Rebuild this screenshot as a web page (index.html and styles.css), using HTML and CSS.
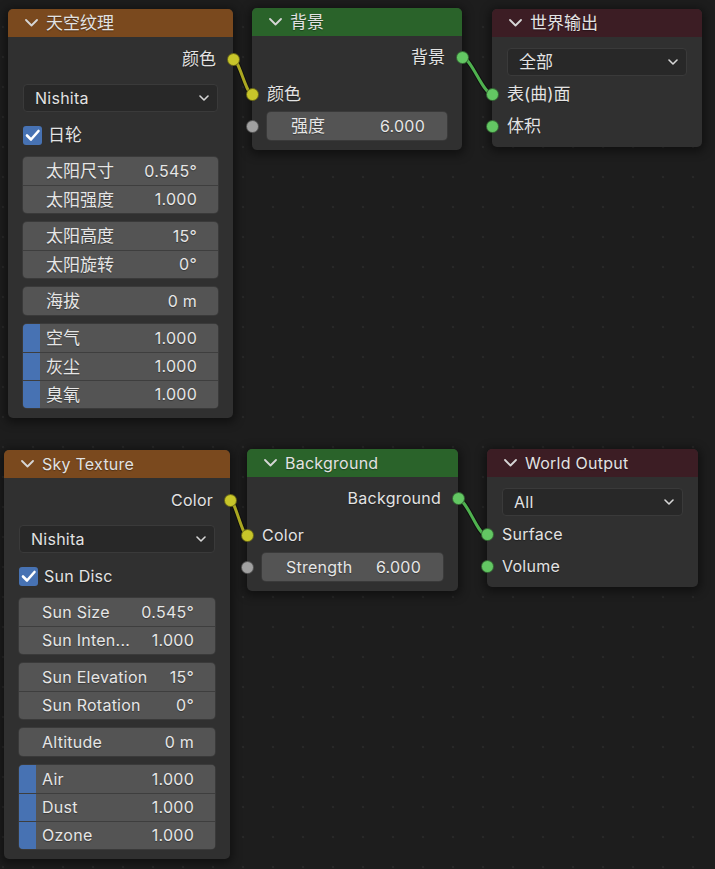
FILE: index.html
```html
<!DOCTYPE html>
<html lang="zh">
<head>
<meta charset="utf-8">
<title>Nodes</title>
<link rel="stylesheet" href="styles.css">
</head>
<body>
<div class="canvas">
  <svg class="wires" width="715" height="869" viewBox="0 0 715 869">
    <g class="w-out">
      <path d="M233 59 C239 59 246 94 252 94"/>
      <path d="M462 57 C471 57 483 94 492 94"/>
      <path d="M230 500 C235 500 242 535 247 535"/>
      <path d="M458 499 C467 499 478 536 487 536"/>
    </g>
    <g class="w-yel">
      <path d="M233 59 C239 59 246 94 252 94"/>
      <path d="M230 500 C235 500 242 535 247 535"/>
    </g>
    <g class="w-grn">
      <path d="M462 57 C471 57 483 94 492 94"/>
      <path d="M458 499 C467 499 478 536 487 536"/>
    </g>
  </svg>

  <!-- Top row (Chinese) -->
  <div class="node sky n1">
    <div class="hdr tex"><svg class="chev" viewBox="0 0 13 8"><path d="M1 1 L6.5 6.5 L12 1"/></svg><span class="cjk">天空纹理</span></div>
    <div class="body b-sky">
      <div class="row out"><span class="cjk">颜色</span><i class="sock so yel"></i></div>
      <div class="dd"><span>Nishita</span><svg class="ddchev" viewBox="0 0 10 6"><path d="M1 1 L5 5 L9 1"/></svg></div>
      <div class="chk"><span class="box"><svg viewBox="0 0 19 19"><path d="M4 9.5 L8 13.5 L15.5 5"/></svg></span><span class="cjk">日轮</span></div>
      <div class="grp g1">
        <div class="fld"><span class="cjk">太阳尺寸</span><span>0.545°</span></div>
        <div class="fld"><span class="cjk">太阳强度</span><span>1.000</span></div>
      </div>
      <div class="grp">
        <div class="fld"><span class="cjk">太阳高度</span><span>15°</span></div>
        <div class="fld"><span class="cjk">太阳旋转</span><span>0°</span></div>
      </div>
      <div class="grp">
        <div class="fld"><span class="cjk">海拔</span><span>0 m</span></div>
      </div>
      <div class="grp">
        <div class="fld fac"><span class="cjk">空气</span><span>1.000</span></div>
        <div class="fld fac"><span class="cjk">灰尘</span><span>1.000</span></div>
        <div class="fld fac"><span class="cjk">臭氧</span><span>1.000</span></div>
      </div>
    </div>
  </div>

  <div class="node bg n2">
    <div class="hdr shd"><svg class="chev" viewBox="0 0 13 8"><path d="M1 1 L6.5 6.5 L12 1"/></svg><span class="cjk">背景</span></div>
    <div class="body b-bg">
      <div class="row out"><span class="cjk">背景</span><i class="sock so grn"></i></div>
      <div class="row in r-col"><i class="sock si yel"></i><span class="cjk">颜色</span></div>
      <div class="grp g-str">
        <div class="fld str"><i class="sock si gry"></i><span class="cjk">强度</span><span>6.000</span></div>
      </div>
    </div>
  </div>

  <div class="node wo n3">
    <div class="hdr outp"><svg class="chev" viewBox="0 0 13 8"><path d="M1 1 L6.5 6.5 L12 1"/></svg><span class="cjk">世界输出</span></div>
    <div class="body b-wo">
      <div class="dd"><span class="cjk">全部</span><svg class="ddchev" viewBox="0 0 10 6"><path d="M1 1 L5 5 L9 1"/></svg></div>
      <div class="row in r-surf"><i class="sock si grn"></i><span class="cjk">表(曲)面</span></div>
      <div class="row in r-vol"><i class="sock si grn"></i><span class="cjk">体积</span></div>
    </div>
  </div>

  <!-- Bottom row (English) -->
  <div class="node sky n4">
    <div class="hdr tex"><svg class="chev" viewBox="0 0 13 8"><path d="M1 1 L6.5 6.5 L12 1"/></svg><span>Sky Texture</span></div>
    <div class="body b-sky">
      <div class="row out"><span>Color</span><i class="sock so yel"></i></div>
      <div class="dd"><span>Nishita</span><svg class="ddchev" viewBox="0 0 10 6"><path d="M1 1 L5 5 L9 1"/></svg></div>
      <div class="chk"><span class="box"><svg viewBox="0 0 19 19"><path d="M4 9.5 L8 13.5 L15.5 5"/></svg></span><span>Sun Disc</span></div>
      <div class="grp g1">
        <div class="fld"><span>Sun Size</span><span>0.545°</span></div>
        <div class="fld"><span>Sun Inten...</span><span>1.000</span></div>
      </div>
      <div class="grp">
        <div class="fld"><span>Sun Elevation</span><span>15°</span></div>
        <div class="fld"><span>Sun Rotation</span><span>0°</span></div>
      </div>
      <div class="grp">
        <div class="fld"><span>Altitude</span><span>0 m</span></div>
      </div>
      <div class="grp">
        <div class="fld fac"><span>Air</span><span>1.000</span></div>
        <div class="fld fac"><span>Dust</span><span>1.000</span></div>
        <div class="fld fac"><span>Ozone</span><span>1.000</span></div>
      </div>
    </div>
  </div>

  <div class="node bg n5">
    <div class="hdr shd"><svg class="chev" viewBox="0 0 13 8"><path d="M1 1 L6.5 6.5 L12 1"/></svg><span>Background</span></div>
    <div class="body b-bg">
      <div class="row out"><span>Background</span><i class="sock so grn"></i></div>
      <div class="row in r-col"><i class="sock si yel"></i><span>Color</span></div>
      <div class="grp g-str">
        <div class="fld str"><i class="sock si gry"></i><span>Strength</span><span>6.000</span></div>
      </div>
    </div>
  </div>

  <div class="node wo n6">
    <div class="hdr outp"><svg class="chev" viewBox="0 0 13 8"><path d="M1 1 L6.5 6.5 L12 1"/></svg><span>World Output</span></div>
    <div class="body b-wo">
      <div class="dd"><span>All</span><svg class="ddchev" viewBox="0 0 10 6"><path d="M1 1 L5 5 L9 1"/></svg></div>
      <div class="row in r-surf"><i class="sock si grn"></i><span>Surface</span></div>
      <div class="row in r-vol"><i class="sock si grn"></i><span>Volume</span></div>
    </div>
  </div>
</div>
</body>
</html>
```

FILE: styles.css
```css
* { box-sizing: border-box; }
html, body { margin: 0; padding: 0; }
body {
  background: #1d1d1d;
  font-family: "Inter", "Noto Sans CJK SC", sans-serif;
  font-size: 16px;
  letter-spacing: 0.25px;
  color: #e3e3e3;
}
.canvas {
  position: relative;
  width: 715px;
  height: 869px;
  overflow: hidden;
  background-color: #1d1d1d;
  background-image: radial-gradient(circle at 3px 27px, #282828 0, #282828 1.1px, transparent 1.6px);
  background-size: 30px 30px;
}
.cjk { font-size: 17px; letter-spacing: 0; margin-bottom: 3px; }

.wires { position: absolute; left: 0; top: 0; z-index: 1; pointer-events: none; }
.wires path { fill: none; stroke-linecap: round; }
.w-out path { stroke: rgba(10,10,10,0.7); stroke-width: 5; }
.w-yel path { stroke: #aaa721; stroke-width: 3; }
.w-grn path { stroke: #4fb14f; stroke-width: 3; }

.node {
  position: absolute;
  background: #303030;
  border-radius: 5px;
  box-shadow: 0 2px 10px 3px rgba(0,0,0,0.42);
  text-shadow: 0 1px 1px rgba(0,0,0,0.35);
}
.n1 { left: 8px; top: 9px; width: 225px; }
.n2 { left: 252px; top: 8px; width: 210px; }
.n3 { left: 492px; top: 9px; width: 210px; }
.n4 { left: 4px; top: 450px; width: 226px; }
.n5 { left: 247px; top: 449px; width: 211px; }
.n6 { left: 487px; top: 449px; width: 211px; }

.hdr {
  height: 28px;
  display: flex;
  align-items: center;
  padding-left: 17px;
  border-radius: 5px 5px 0 0;
  color: #e2e2e2;
}
.hdr.tex { background: #7a491e; }
.hdr.shd { background: #2a632a; }
.hdr.outp { background: #3c1d24; }
.chev { width: 13px; height: 8px; margin-right: 8px; flex: none; }
.chev path { fill: none; stroke: #d6d6d6; stroke-width: 1.8; stroke-linecap: round; stroke-linejoin: round; }

.body { display: flex; flex-direction: column; padding: 0 15px 10px; }
.b-sky { padding-top: 9px; }
.b-bg { padding-top: 8px; }
.b-wo { padding-top: 11px; padding-bottom: 8px; }

.row { height: 26px; display: flex; align-items: center; position: relative; }
.row.out { justify-content: flex-end; padding-right: 2px; }
.r-col { margin-top: 11px; }
.r-surf { margin-top: 5px; }
.r-vol { margin-top: 6px; }

.sock {
  position: absolute;
  top: 50%;
  width: 13px;
  height: 13px;
  margin-top: -6.5px;
  border-radius: 50%;
  border: 1px solid rgba(0,0,0,0.45);
  z-index: 2;
}
.so { right: -21.5px; }
.si { left: -21.5px; }
.yel { background: #c8c62a; }
.grn { background: #63c763; }
.gry { background: #a1a1a1; }

.dd {
  height: 28px;
  display: flex;
  align-items: center;
  justify-content: space-between;
  padding: 0 8px 0 11px;
  background: #282828;
  border: 1px solid #3a3a3a;
  border-radius: 4px;
}
.b-sky .dd { margin-top: 12px; }
.ddchev { width: 10px; height: 6px; flex: none; }
.ddchev path { fill: none; stroke: #d6d6d6; stroke-width: 1.6; stroke-linecap: round; stroke-linejoin: round; }

.chk { height: 26px; margin-top: 10px; display: flex; align-items: center; gap: 6px; }
.box {
  width: 19px;
  height: 19px;
  border-radius: 3px;
  background: #4772b3;
  display: flex;
  flex: none;
}
.box svg { width: 19px; height: 19px; }
.box path { fill: none; stroke: #fff; stroke-width: 2.6; stroke-linecap: round; stroke-linejoin: round; }

.grp {
  margin-top: 9px;
  border-radius: 4px;
  background: #545454;
  box-shadow: 0 0 0 1px #3a3a3a;
}
.g-str { margin-top: 5px; }
.fld {
  height: 28px;
  display: flex;
  align-items: center;
  justify-content: space-between;
  padding: 0 21px 0 23px;
  position: relative;
  color: #e6e6e6;
}
.fld > span:not(.cjk) { margin-bottom: 1px; }
.fld + .fld { border-top: 1px solid #3e3e3e; }
.grp .fld:first-child { border-radius: 4px 4px 0 0; }
.grp .fld:last-child { border-radius: 0 0 4px 4px; }
.grp .fld:only-child { border-radius: 4px; }
.fac { background: linear-gradient(to right, #4772b3 17px, #545454 17px); }
.str { padding: 0 22px 0 24px; }
```
